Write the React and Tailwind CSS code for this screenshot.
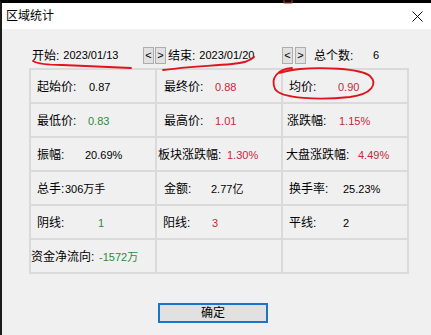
import React from "react";

const FONT = { fontFamily: '"Liberation Sans", "Noto Sans CJK SC", sans-serif' };

const RED = "text-[#c8283a]";
const GREEN = "text-[#2f8a3c]";
const BLACK = "text-black";

const rows = [
  [
    { l: "起始价:", v: "0.87", c: BLACK, pl: "pl-[6px]", w: "w-[52px]" },
    { l: "最终价:", v: "0.88", c: RED, pl: "pl-[7px]", w: "w-[51px]" },
    { l: "均价:", v: "0.90", c: RED, pl: "pl-[6px]", w: "w-[49px]" },
  ],
  [
    { l: "最低价:", v: "0.83", c: GREEN, pl: "pl-[6px]", w: "w-[51px]" },
    { l: "最高价:", v: "1.01", c: RED, pl: "pl-[7px]", w: "w-[51px]" },
    { l: "涨跌幅:", v: "1.15%", c: RED, pl: "pl-[4px]", w: "w-[52px]" },
  ],
  [
    { l: "振幅:", v: "20.69%", c: BLACK, pl: "pl-[6px]", w: "w-[48px]" },
    { l: "板块涨跌幅:", v: "1.30%", c: RED, pl: "pl-[1px]", w: "w-[69px]" },
    { l: "大盘涨跌幅:", v: "4.49%", c: RED, pl: "pl-[3px]", w: "w-[72px]" },
  ],
  [
    { l: "总手:", v: "306万手", c: BLACK, pl: "pl-[6px]", w: "w-[28px]" },
    { l: "金额:", v: "2.77亿", c: BLACK, pl: "pl-[7px]", w: "w-[47px]" },
    { l: "换手率:", v: "25.23%", c: BLACK, pl: "pl-[6px]", w: "w-[54px]" },
  ],
  [
    { l: "阴线:", v: "1", c: GREEN, pl: "pl-[6px]", w: "w-[61px]" },
    { l: "阳线:", v: "3", c: RED, pl: "pl-[6px]", w: "w-[49px]" },
    { l: "平线:", v: "2", c: BLACK, pl: "pl-[6px]", w: "w-[54px]" },
  ],
  [
    { l: "资金净流向:", v: "-1572万", c: GREEN, pl: "pl-[0px]", w: "w-[68px]" },
    null,
    null,
  ],
];

function Cell({ cell }) {
  return (
    <div className="h-[34px] border-r-2 border-b-2 border-[#dadada] flex items-center pt-[2px] overflow-hidden whitespace-nowrap">
      {cell && (
        <div className={`flex items-center ${cell.pl}`}>
          <span className={`${cell.w} shrink-0 text-[12px] text-black`}>{cell.l}</span>
          <span className={`text-[11px] ${cell.c}`}>{cell.v}</span>
        </div>
      )}
    </div>
  );
}

function SmallBtn({ children }) {
  return (
    <div className="w-[11px] h-[17px] bg-[#e1e1e1] border border-[#adadad] flex items-center justify-center text-[11px] leading-none text-black">
      {children}
    </div>
  );
}

export default function App() {
  return (
    <div className="relative w-[431px] h-[335px] overflow-hidden bg-[#111]" style={FONT}>
      <div className="w-full h-full border-t-[3px] border-t-black border-l-2 border-l-[#1b1b1b] bg-[#f0f0f0] flex flex-col">
        {/* Title bar */}
        <div className="h-[26px] bg-white flex items-center justify-between pl-[4px] pr-[8px] shrink-0">
          <span className="text-[12px] text-black">区域统计</span>
          <svg width="11" height="11" viewBox="0 0 11 11">
            <path d="M0.5 0.5 L10.5 10.5 M10.5 0.5 L0.5 10.5" stroke="#111" strokeWidth="1" />
          </svg>
        </div>

        {/* Top row */}
        <div className="mt-[18px] h-[17px] flex items-center pl-[30px] whitespace-nowrap">
          <div className="w-[111px] flex items-center">
            <span className="text-[12px]">开始:</span>
            <span className="text-[11px] ml-[4px]">2023/01/13</span>
          </div>
          <div className="flex gap-[1px]">
            <SmallBtn>&lt;</SmallBtn>
            <SmallBtn>&gt;</SmallBtn>
          </div>
          <div className="ml-[2px] w-[114px] flex items-center">
            <span className="text-[12px]">结束:</span>
            <span className="text-[11px] ml-[4px]">2023/01/20</span>
          </div>
          <div className="flex gap-[2px]">
            <SmallBtn>&lt;</SmallBtn>
            <SmallBtn>&gt;</SmallBtn>
          </div>
          <span className="ml-[8px] w-[59px] text-[12px]">总个数:</span>
          <span className="text-[11px]">6</span>
        </div>

        {/* Grid */}
        <div className="mt-[4px] ml-[27px] w-[380px] border-l-2 border-t-2 border-[#dadada] grid grid-cols-[126px_126px_126px]">
          {rows.map((r, i) =>
            r.map((c, j) => <Cell key={`${i}-${j}`} cell={c} />)
          )}
        </div>

        {/* OK button */}
        <div className="mt-[29px] ml-[156px] w-[110px] h-[20px] border-2 border-[#1a74c8] bg-[#e1e1e1] flex items-center justify-center text-[12px] text-black">
          确定
        </div>
      </div>

      {/* Hand-drawn red annotations */}
      <svg className="absolute inset-0 pointer-events-none" width="431" height="335" viewBox="0 0 431 335">
        <g fill="none" stroke="#e0141e" strokeWidth="1.8" strokeLinecap="round">
          <path d="M33 61 C38 64 46 65 62 65 C85 66 110 67 131 68" />
          <path d="M163 70 C185 67 210 66 232 64 C244 63 250 61 254 57" />
          <path d="M292 68 C278 69 270 78 275 89 C281 99 320 100 350 97 C372 94 378 84 370 76 C360 68 320 67 300 69 C292 70 286 71 280 73" />
        </g>
        <rect x="284" y="-1" width="8" height="4" fill="none" stroke="#b03030" strokeWidth="1" />
      </svg>
    </div>
  );
}
